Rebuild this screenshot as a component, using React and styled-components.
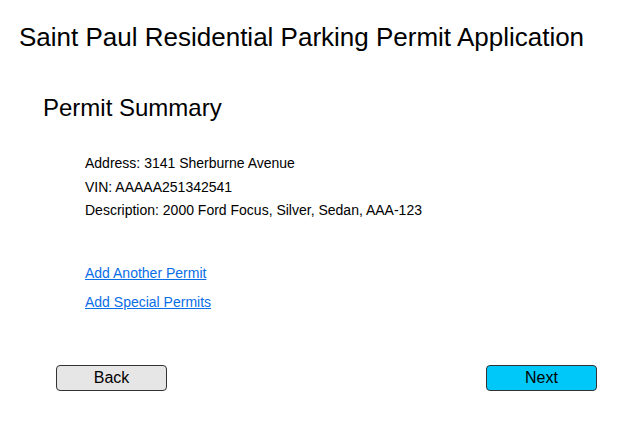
import React from "react";
import styled, { createGlobalStyle } from "styled-components";

const Global = createGlobalStyle`
  html, body { margin: 0; padding: 0; background: #fff; }
  body { font-family: "Liberation Sans", Arial, sans-serif; color: #000; }
`;

const Page = styled.div`
  width: 632px;
  height: 436px;
  box-sizing: border-box;
  padding: 20px 0 0 19px;
  display: flex;
  flex-direction: column;
`;

const Title = styled.h1`
  margin: 0;
  font-size: 26px;
  font-weight: normal;
  line-height: 34px;
`;

const Section = styled.section`
  padding-left: 24px;
  margin-top: 38px;
  display: flex;
  flex-direction: column;
`;

const Heading = styled.h2`
  margin: 0;
  font-size: 24px;
  font-weight: normal;
  line-height: 32px;
`;

const Details = styled.div`
  margin-top: 28px;
  padding-left: 42px;
  display: flex;
  flex-direction: column;
`;

const Line = styled.div`
  font-size: 14px;
  line-height: 23.5px;
`;

const Links = styled.div`
  margin-top: 42px;
  padding-left: 66px;
  display: flex;
  flex-direction: column;
  gap: 13px;
`;

const Link = styled.a`
  font-size: 14px;
  line-height: 16px;
  color: #0a6ee6;
  text-decoration: underline;
  align-self: flex-start;
  cursor: pointer;
`;

const Actions = styled.div`
  margin-top: 55px;
  padding: 0 35px 0 37px;
  display: flex;
  justify-content: space-between;
`;

const Button = styled.button`
  width: 111px;
  height: 26px;
  box-sizing: border-box;
  border: 1px solid #333;
  border-radius: 4px;
  background: ${(p) => (p.$primary ? "#00c8f8" : "#e6e6e6")};
  font-family: "Liberation Sans", Arial, sans-serif;
  font-size: 16px;
  color: #000;
  padding: 0;
  cursor: pointer;
`;

export default function App() {
  return (
    <>
      <Global />
      <Page>
        <Title>Saint Paul Residential Parking Permit Application</Title>
        <Section>
          <Heading>Permit Summary</Heading>
          <Details>
            <Line>Address: 3141 Sherburne Avenue</Line>
            <Line>VIN: AAAAA251342541</Line>
            <Line>Description: 2000 Ford Focus, Silver, Sedan, AAA-123</Line>
          </Details>
        </Section>
        <Links>
          <Link>Add Another Permit</Link>
          <Link>Add Special Permits</Link>
        </Links>
        <Actions>
          <Button>Back</Button>
          <Button $primary>Next</Button>
        </Actions>
      </Page>
    </>
  );
}
